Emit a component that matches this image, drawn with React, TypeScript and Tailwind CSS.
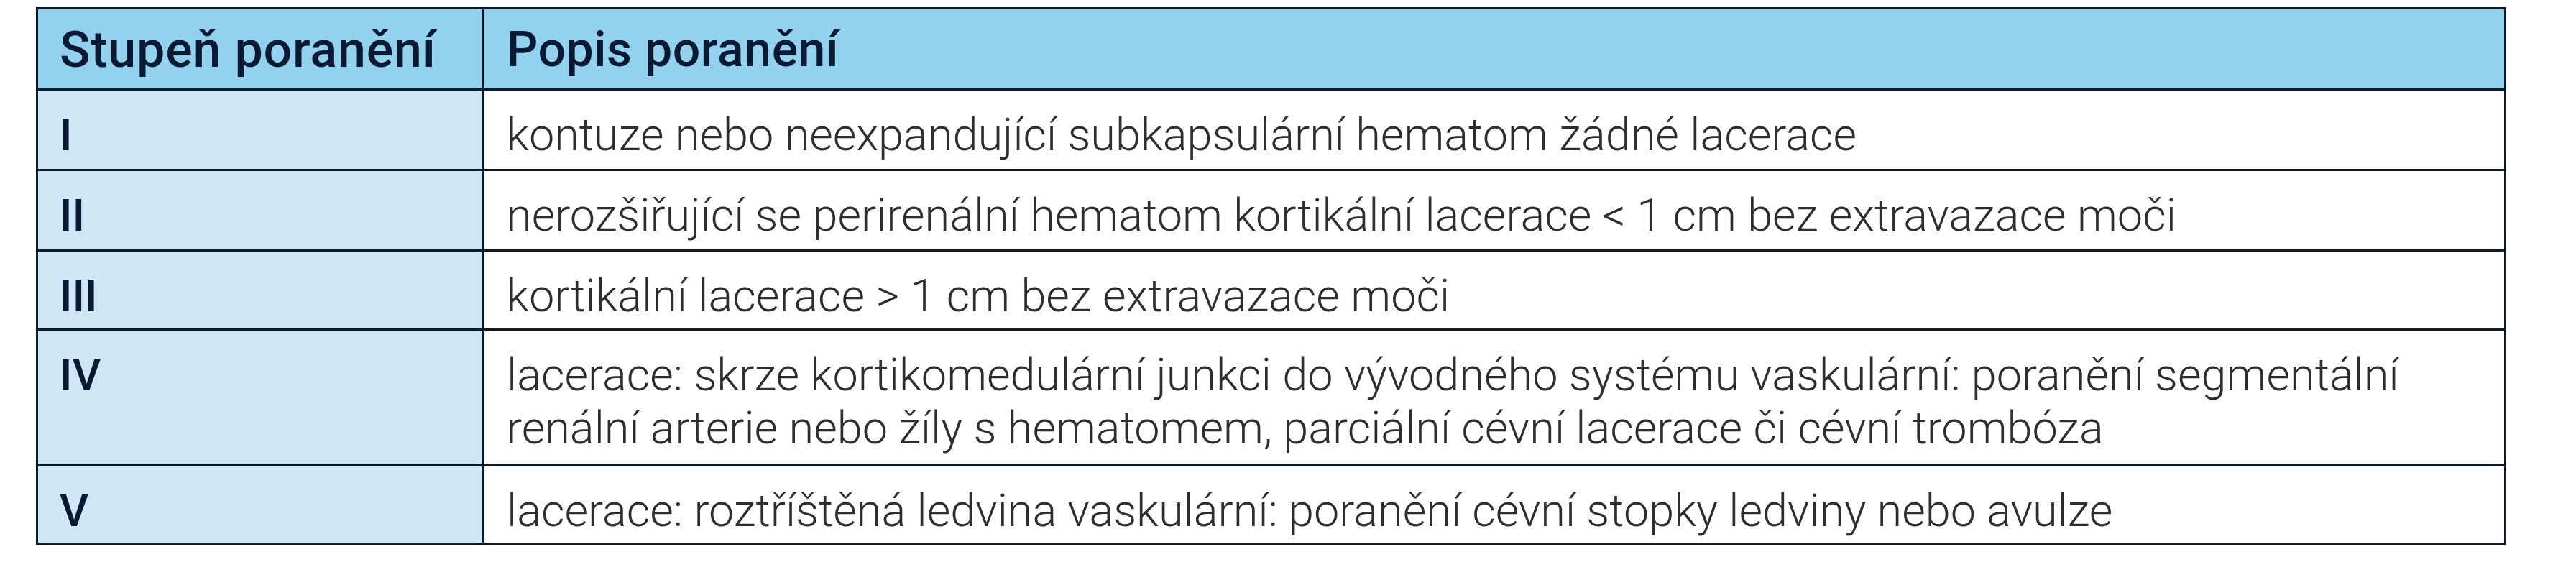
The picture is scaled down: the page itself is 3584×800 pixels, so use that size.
import React from 'react';

type Row = {
  grade: string;
  lines: string[];
  height: string;
};

const rows: Row[] = [
  {
    grade: 'I',
    lines: ['kontuze nebo neexpandující subkapsulární hematom žádné lacerace'],
    height: 'h-[112px]',
  },
  {
    grade: 'II',
    lines: ['nerozšiřující se perirenální hematom kortikální lacerace < 1 cm bez extravazace moči'],
    height: 'h-[112px]',
  },
  {
    grade: 'III',
    lines: ['kortikální lacerace > 1 cm bez extravazace moči'],
    height: 'h-[110px]',
  },
  {
    grade: 'IV',
    lines: [
      'lacerace: skrze kortikomedulární junkci do vývodného systému vaskulární: poranění segmentální',
      'renální arterie nebo žíly s hematomem, parciální cévní lacerace či cévní trombóza',
    ],
    height: 'h-[189px]',
  },
  {
    grade: 'V',
    lines: ['lacerace: roztříštěná ledvina vaskulární: poranění cévní stopky ledviny nebo avulze'],
    height: 'h-[109px]',
  },
];

export default function App() {
  return (
    <div className="w-[3584px] h-[800px] bg-white pl-[50px] pt-[10px] font-['Roboto','Liberation_Sans',sans-serif]">
      <div className="w-[3437px] border-[3px] border-[#0d1a2b] flex flex-col">
        {/* header */}
        <div className="flex h-[110px] bg-[#92d2ee] text-[#0b1a33]">
          <div className="w-[621px] shrink-0 border-r-[3px] border-[#0d1a2b] pl-[30px] pt-[19px] text-[70px] leading-[74px] font-medium tracking-[0.8px]">
            Stupeň poranění
          </div>
          <div className="flex-1 pl-[31px] pt-[19px] text-[68px] leading-[74px] font-medium tracking-[0.5px]">
            Popis poranění
          </div>
        </div>

        {rows.map((row) => (
          <div key={row.grade} className={`flex border-t-[3px] border-[#0d1a2b] ${row.height}`}>
            <div className="w-[621px] shrink-0 bg-[#cde7f6] border-r-[3px] border-[#0d1a2b] pl-[30px] pt-[25px] text-[62px] leading-[74px] font-medium text-[#0b1a33]">
              {row.grade}
            </div>
            <div className="flex-1 bg-white pl-[31px] pt-[25px] text-[63px] leading-[74px] font-light text-[#2e2e2e]">
              {row.lines.map((line) => (
                <div key={line} className="whitespace-nowrap">
                  {line}
                </div>
              ))}
            </div>
          </div>
        ))}
      </div>
    </div>
  );
}
